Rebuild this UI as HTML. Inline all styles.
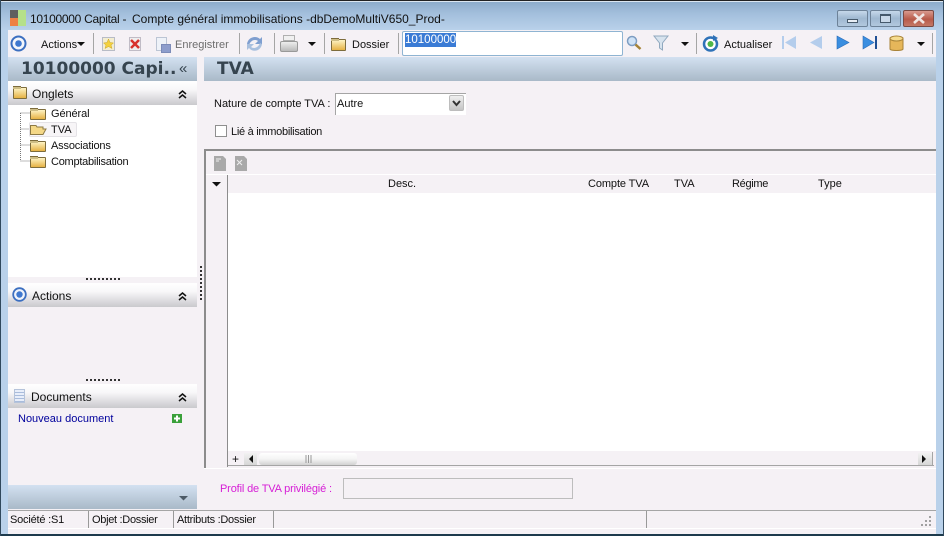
<!DOCTYPE html>
<html><head><meta charset="utf-8"><style>
html,body{margin:0;padding:0;width:944px;height:536px;overflow:hidden;background:#b9d1ea}
*{box-sizing:border-box}
body{position:relative;font-family:"Liberation Sans",sans-serif;font-size:11px;color:#111}
.a{position:absolute}
.t{position:absolute;white-space:nowrap;line-height:14px}
.sep{position:absolute;width:1px;top:33px;height:21px;background:#a5a5a5}
.sh{position:absolute;left:8px;width:189px;height:24px;background:linear-gradient(#fff 0,#f8f7f9 35%,#c9c9cd 100%)}
.fold{position:absolute;width:16px;height:11px;background:linear-gradient(#fdf3c4,#e6b244);border:1px solid #7d6c3c;border-radius:1px}
.fold:before{content:"";position:absolute;left:-1px;top:-2px;width:8px;height:2px;background:#cdbd85;border-top:1px solid #7d6c3c}
.h{font-family:"DejaVu Sans",sans-serif;font-size:17px;line-height:18px;font-weight:bold;color:#36444f}
svg{position:absolute;overflow:visible}
</style></head><body>
<!-- frame -->
<div class="a" style="left:0;top:0;width:944px;height:30px;background:linear-gradient(#8aa9c8,#a3bfdc 45%,#b9d1ea)"></div>
<div class="a" style="left:0;top:0;width:944px;height:1px;background:#222"></div>
<div class="a" style="left:0;top:1px;width:944px;height:1px;background:#dbe6f0"></div>
<div class="a" style="left:0;top:534px;width:944px;height:2px;background:#1d3a4c"></div>
<div class="a" style="left:0;top:0;width:1px;height:536px;background:#30485c"></div>
<div class="a" style="left:943px;top:0;width:1px;height:536px;background:#30485c"></div>
<!-- app icon -->
<div class="a" style="left:10px;top:10px;width:8px;height:8px;background:#5f5f5f"></div>
<div class="a" style="left:10px;top:18px;width:8px;height:8px;background:#ee8044"></div>
<div class="a" style="left:18px;top:10px;width:8px;height:16px;background:#b5e08a"></div>
<div class="t" style="left:30px;top:12px;font-size:12px;letter-spacing:-.29px">10100000 Capital -</div>
<div class="t" style="left:132px;top:12px;font-size:12px">Compte général immobilisations -dbDemoMultiV650_Prod-</div>
<!-- window buttons -->
<div class="a" style="left:837px;top:10px;width:31px;height:17px;border:1px solid #6d8298;border-radius:2px;background:linear-gradient(#c6d8ea,#9fb8d0 50%,#b2c8de)"></div>
<div class="a" style="left:847px;top:19px;width:11px;height:4px;background:#e8eef5;border:1px solid #46596b"></div>
<div class="a" style="left:870px;top:10px;width:31px;height:17px;border:1px solid #6d8298;border-radius:2px;background:linear-gradient(#c6d8ea,#9fb8d0 50%,#b2c8de)"></div>
<div class="a" style="left:880px;top:14px;width:11px;height:9px;border:1px solid #46596b;border-top-width:2px;background:#c9d8e8"></div>
<div class="a" style="left:903px;top:10px;width:31px;height:17px;border:1px solid #7a4a44;border-radius:2px;background:linear-gradient(#d99a8e,#b85a4a 55%,#c47866)"></div>
<svg style="left:912px;top:13px" width="14" height="11"><path d="M2 1L12 10M12 1L2 10" stroke="#f0e6e4" stroke-width="2.600"/></svg>
<!-- client -->
<div class="a" style="left:8px;top:30px;width:928px;height:504px;background:#f5f1f5"></div>
<!-- toolbar -->
<svg style="left:10px;top:35px" width="17" height="17"><circle cx="8.500" cy="8.500" r="7" fill="#f4f6fb" stroke="#3c6fc0" stroke-width="2"/><circle cx="8.500" cy="8.500" r="3.300" fill="#3f78cf"/></svg>
<div class="t" style="left:41px;top:38px">Actions</div>
<svg style="left:77px;top:42px" width="8" height="5"><path d="M0 0H8L4 4Z" fill="#111"/></svg>
<div class="sep" style="left:93px"></div>
<div class="a" style="left:102px;top:37px;width:13px;height:14px;background:#f3edd0;border:1px solid #b8bcc6"></div>
<svg style="left:103px;top:38px" width="11" height="11"><path d="M5.500 1L7 4.500L10.500 5L8 7L9 10.500L5.500 8.500L2 10.500L3 7L.5 5L4 4.500Z" fill="#f4d13c" stroke="#c9a527" stroke-width=".5"/></svg>
<div class="a" style="left:129px;top:37px;width:12px;height:14px;background:#eee;border:1px solid #c0bcc6"></div>
<svg style="left:130px;top:39px" width="10" height="10"><path d="M1 1L9 9M9 1L1 9" stroke="#d8322c" stroke-width="2.500"/></svg>
<div class="a" style="left:156px;top:37px;width:11px;height:14px;background:#eef2f8;border:1px solid #bcc5d4"></div>
<div class="a" style="left:161px;top:44px;width:10px;height:9px;background:#8d9dcc;border:1px solid #7c8bb8"></div>
<div class="t" style="left:175px;top:38px;color:#6d6d6d">Enregistrer</div>
<div class="sep" style="left:239px"></div>
<svg style="left:246px;top:35px" width="17" height="17"><path d="M1 9C2 2 10 0 14 4L16 2V9H9L12 6C9 4 5 5 3 10Z" fill="#7f9fd0"/><path d="M16 9C15 16 7 18 3 13L1 15V9H8L5 12C8 14 12 13 14 8Z" fill="#a9c0de"/></svg>
<div class="sep" style="left:274px"></div>
<div class="a" style="left:283px;top:35px;width:12px;height:6px;background:#f0f0f0;border:1px solid #b0b0b0"></div>
<div class="a" style="left:280px;top:41px;width:18px;height:11px;background:linear-gradient(#eee,#b9b9b9);border:1px solid #999;border-radius:2px"></div>
<svg style="left:308px;top:42px" width="8" height="5"><path d="M0 0H8L4 4Z" fill="#111"/></svg>
<div class="sep" style="left:324px"></div>
<div class="fold" style="left:331px;top:39px;width:15px;height:12px"></div>
<div class="t" style="left:352px;top:38px">Dossier</div>
<div class="sep" style="left:398px"></div>
<div class="a" style="left:402px;top:31px;width:221px;height:25px;background:#fff;border:1px solid #8fb4d2;border-radius:2px"></div>
<div class="t" style="left:405px;top:33px;height:14px;background:#3a7bd5;color:#fff;font-size:11.500px">10100000</div>
<svg style="left:626px;top:35px" width="16" height="16"><circle cx="6" cy="6" r="4.500" fill="#cfe3f7" stroke="#7d9dc2" stroke-width="1.500"/><path d="M9.500 9.500L14.500 14" stroke="#a58235" stroke-width="2.500"/></svg>
<svg style="left:653px;top:35px" width="16" height="16"><path d="M1 1H15L9.500 8V15L6.500 13V8Z" fill="#d7e3ee" stroke="#91a9bf"/></svg>
<svg style="left:681px;top:42px" width="8" height="5"><path d="M0 0H8L4 4Z" fill="#111"/></svg>
<div class="sep" style="left:696px"></div>
<svg style="left:702px;top:35px" width="18" height="18"><circle cx="8.500" cy="9" r="6.500" fill="#fff" stroke="#2f72b8" stroke-width="2.500"/><circle cx="8.500" cy="9" r="3" fill="#4fb648"/><path d="M11 0L16 3L11 6Z" fill="#2f72b8"/></svg>
<div class="t" style="left:724px;top:38px">Actualiser</div>
<svg style="left:781px;top:36px" width="16" height="14"><path d="M1 0H3V13H1ZM15 0V13L4 6.500Z" fill="#b4cdec"/></svg>
<svg style="left:809px;top:36px" width="14" height="14"><path d="M13 0V13L1 6.500Z" fill="#b4cdec"/></svg>
<svg style="left:836px;top:36px" width="14" height="14"><path d="M1 0V13L13 6.500Z" fill="#3a8ee0" stroke="#2b6cb8" stroke-width=".6"/></svg>
<svg style="left:862px;top:36px" width="16" height="14"><path d="M1 0V13L12 6.500Z" fill="#3a8ee0" stroke="#2b6cb8" stroke-width=".6"/><path d="M13 0H15V13H13Z" fill="#1f4f94"/></svg>
<svg style="left:889px;top:35px" width="16" height="17"><path d="M1 3V14C1 16 14 16 14 14V3Z" fill="#e6b65a" stroke="#a98338"/><ellipse cx="7.500" cy="3.500" rx="6.500" ry="2.500" fill="#f6dc8f" stroke="#a98338"/></svg>
<svg style="left:917px;top:42px" width="8" height="5"><path d="M0 0H8L4 4Z" fill="#111"/></svg>
<div class="sep" style="left:932px"></div>
<!-- headers -->
<div class="a" style="left:8px;top:57px;width:189px;height:24px;background:linear-gradient(#d3e1f1,#a9b9c8)"></div>
<div class="t h" style="left:21px;top:60px">10100000 Capi..</div>
<div class="t" style="left:179px;top:60px;font-size:15px;line-height:18px;color:#36444f">«</div>
<div class="a" style="left:204px;top:57px;width:732px;height:24px;background:linear-gradient(#d3e1f1,#a9b9c8)"></div>
<div class="t h" style="left:217px;top:60px">TVA</div>
<!-- sidebar -->
<div class="a" style="left:8px;top:105px;width:189px;height:172px;background:#fff"></div>
<div class="sh" style="top:81px"></div>
<div class="fold" style="left:13px;top:87px;width:14px;height:12px"></div>
<div class="t" style="left:32px;top:87px;font-size:12px">Onglets</div>
<svg style="left:178px;top:90px" width="9" height="9"><path d="M1 4L4.500 1L8 4M1 8L4.500 5L8 8" fill="none" stroke="#111" stroke-width="1.500"/></svg>
<!-- tree -->
<svg style="left:20px;top:113px" width="12" height="50"><path d="M.5 0V48M.5 0H11M.5 16H11M.5 32H11M.5 48H11" stroke="#777" stroke-dasharray="1 1" fill="none"/></svg>
<div class="fold" style="left:30px;top:109px"></div><div class="t" style="left:51px;top:107px;letter-spacing:-.1px">Général</div>
<div class="a" style="left:29px;top:122px;width:48px;height:15px;background:#f7f5f7;border:1px solid #e4e2e6;border-radius:2px"></div>
<svg style="left:30px;top:124px" width="17" height="11"><path d="M.5 10.500V1.500H6L7 3H13V5H16L13 10.500Z" fill="#f4d887" stroke="#8d7a45"/></svg>
<div class="t" style="left:51px;top:123px">TVA</div>
<div class="fold" style="left:30px;top:141px"></div><div class="t" style="left:51px;top:139px;letter-spacing:-.17px">Associations</div>
<div class="fold" style="left:30px;top:157px"></div><div class="t" style="left:51px;top:155px;letter-spacing:-.25px">Comptabilisation</div>
<div class="a" style="left:86px;top:278px;width:34px;height:2px;background:repeating-linear-gradient(90deg,#333 0 2px,transparent 2px 4px)"></div>
<div class="a" style="left:200px;top:266px;width:2px;height:34px;background:repeating-linear-gradient(#333 0 2px,transparent 2px 4px)"></div>
<div class="sh" style="top:283px"></div>
<svg style="left:12px;top:287px" width="15" height="15"><circle cx="7.500" cy="7.500" r="6.300" fill="#eef3fb" stroke="#3c6fc0" stroke-width="1.800"/><circle cx="7.500" cy="7.500" r="3.200" fill="#3f78cf"/></svg>
<div class="t" style="left:32px;top:289px;font-size:12px">Actions</div>
<svg style="left:178px;top:292px" width="9" height="9"><path d="M1 4L4.500 1L8 4M1 8L4.500 5L8 8" fill="none" stroke="#111" stroke-width="1.500"/></svg>
<div class="a" style="left:86px;top:379px;width:34px;height:2px;background:repeating-linear-gradient(90deg,#333 0 2px,transparent 2px 4px)"></div>
<div class="sh" style="top:384px"></div>
<div class="a" style="left:14px;top:389px;width:11px;height:14px;background:repeating-linear-gradient(#e8eefa 0 2px,#a9bcdc 2px 3px);border:1px solid #b5c3da"></div>
<div class="t" style="left:31px;top:390px;font-size:12px">Documents</div>
<svg style="left:178px;top:393px" width="9" height="9"><path d="M1 4L4.500 1L8 4M1 8L4.500 5L8 8" fill="none" stroke="#111" stroke-width="1.500"/></svg>
<div class="t" style="left:18px;top:412px;color:#00009c">Nouveau document</div>
<div class="a" style="left:172px;top:414px;width:10px;height:9px;background:#3aa03a"></div>
<svg style="left:172px;top:414px" width="10" height="9"><path d="M5 1.500V7.500M2 4.500H8" stroke="#fff" stroke-width="2"/></svg>
<div class="a" style="left:8px;top:485px;width:189px;height:24px;background:linear-gradient(#d3e1f1,#a9b9c8)"></div>
<svg style="left:179px;top:496px" width="9" height="5"><path d="M0 0H9L4.500 4.500Z" fill="#4d5a66"/></svg>
<!-- form -->
<div class="t" style="left:214px;top:97px">Nature de compte TVA :</div>
<div class="a" style="left:335px;top:93px;width:131px;height:22px;background:#fff;border-top:1px solid #a5a5a5;border-left:1px solid #a5a5a5"></div>
<div class="t" style="left:337px;top:97px">Autre</div>
<div class="a" style="left:449px;top:95px;width:15px;height:16px;background:linear-gradient(#efefef,#c4c4c4);border:1px solid #bdbdbd;border-radius:2px"></div>
<svg style="left:452px;top:100px" width="9" height="7"><path d="M1 1L4.500 5L8 1" fill="none" stroke="#333" stroke-width="2"/></svg>
<div class="a" style="left:215px;top:125px;width:12px;height:12px;background:#fff;border:1px solid #8f8f8f"></div>
<div class="t" style="left:231px;top:125px;letter-spacing:-.28px">Lié à immobilisation</div>
<!-- grid -->
<div class="a" style="left:204px;top:149px;width:732px;height:319px;border-top:2px solid #8c8c8c;border-left:2px solid #8c8c8c"></div>
<div class="a" style="left:204px;top:468px;width:732px;height:1px;background:#fff"></div>
<div class="a" style="left:206px;top:151px;width:730px;height:24px;background:#f5f1f5;border-bottom:1px solid #fff"></div>
<svg style="left:214px;top:156px" width="12" height="15"><path d="M0 0H9L12 3V15H0Z" fill="#a9a9a9"/><path d="M2 3H7M2 5H5" stroke="#eee"/></svg>
<svg style="left:235px;top:156px" width="12" height="15"><path d="M0 0H9L12 3V15H0Z" fill="#a9a9a9"/><path d="M2 4L7 9M7 4L2 9" stroke="#eee"/></svg>
<div class="a" style="left:228px;top:176px;width:708px;height:17px;background:#f5f1f5"></div>
<div class="a" style="left:228px;top:193px;width:708px;height:258px;background:#fff"></div>
<div class="a" style="left:206px;top:176px;width:22px;height:292px;background:#f5f1f5"></div>
<div class="a" style="left:227px;top:175px;width:1px;height:292px;background:#8c8c8c"></div>
<svg style="left:212px;top:182px" width="9" height="5"><path d="M0 0H9L4.500 4.500Z" fill="#111"/></svg>
<div class="t" style="left:388px;top:177px">Desc.</div>
<div class="t" style="left:588px;top:177px;letter-spacing:-.1px">Compte TVA</div>
<div class="t" style="left:674px;top:177px">TVA</div>
<div class="t" style="left:732px;top:177px;letter-spacing:-.3px">Régime</div>
<div class="t" style="left:818px;top:177px">Type</div>
<!-- scrollbar -->
<div class="a" style="left:228px;top:452px;width:706px;height:14px;background:#f5f1f5"></div>
<div class="a" style="left:228px;top:465px;width:706px;height:1px;background:#a5a5a5"></div>
<div class="t" style="left:232px;top:452px;font-size:12px">+</div>
<div class="a" style="left:244px;top:453px;width:13px;height:12px;background:linear-gradient(#f2f2f2,#d6d6d6)"></div>
<svg style="left:249px;top:455px" width="5" height="8"><path d="M4 0V8L0 4Z" fill="#111"/></svg>
<div class="a" style="left:259px;top:453px;width:98px;height:12px;border-radius:3px;background:linear-gradient(#fff,#f4f4f4 50%,#d2d2d2)"></div>
<svg style="left:305px;top:455px" width="8" height="8"><path d="M1 0V8M3.500 0V8M6 0V8" stroke="#999"/></svg>
<div class="a" style="left:918px;top:453px;width:14px;height:12px;background:linear-gradient(#f2f2f2,#d6d6d6)"></div>
<svg style="left:922px;top:455px" width="5" height="8"><path d="M0 0V8L4 4Z" fill="#111"/></svg>
<div class="a" style="left:932px;top:452px;width:1px;height:14px;background:#a5a5a5"></div>
<!-- profil -->
<div class="t" style="left:220px;top:482px;color:#d61ed6;letter-spacing:-.15px">Profil de TVA privilégié :</div>
<div class="a" style="left:343px;top:478px;width:230px;height:21px;background:#f5f1f5;border:1px solid #bdbdbd"></div>
<!-- status -->
<div class="a" style="left:8px;top:510px;width:928px;height:1px;background:#a5a5a5"></div>
<div class="a" style="left:8px;top:511px;width:928px;height:17px;background:#f5f1f5"></div>
<div class="a" style="left:8px;top:528px;width:928px;height:1px;background:#fff"></div>
<div class="t" style="left:10px;top:513px;letter-spacing:-.2px">Société :S1</div>
<div class="a" style="left:88px;top:511px;width:1px;height:17px;background:#999"></div>
<div class="t" style="left:92px;top:513px;letter-spacing:-.3px">Objet :Dossier</div>
<div class="a" style="left:173px;top:511px;width:1px;height:17px;background:#999"></div>
<div class="t" style="left:177px;top:513px;letter-spacing:-.28px">Attributs :Dossier</div>
<div class="a" style="left:273px;top:511px;width:1px;height:17px;background:#999"></div>
<div class="a" style="left:646px;top:511px;width:1px;height:17px;background:#999"></div>
<svg style="left:920px;top:515px" width="12" height="12"><path d="M9 1h2v2H9ZM5 5h2v2H5ZM9 5h2v2H9ZM1 9h2v2H1ZM5 9h2v2H5ZM9 9h2v2H9Z" fill="#a0a0a0"/></svg>
</body></html>
